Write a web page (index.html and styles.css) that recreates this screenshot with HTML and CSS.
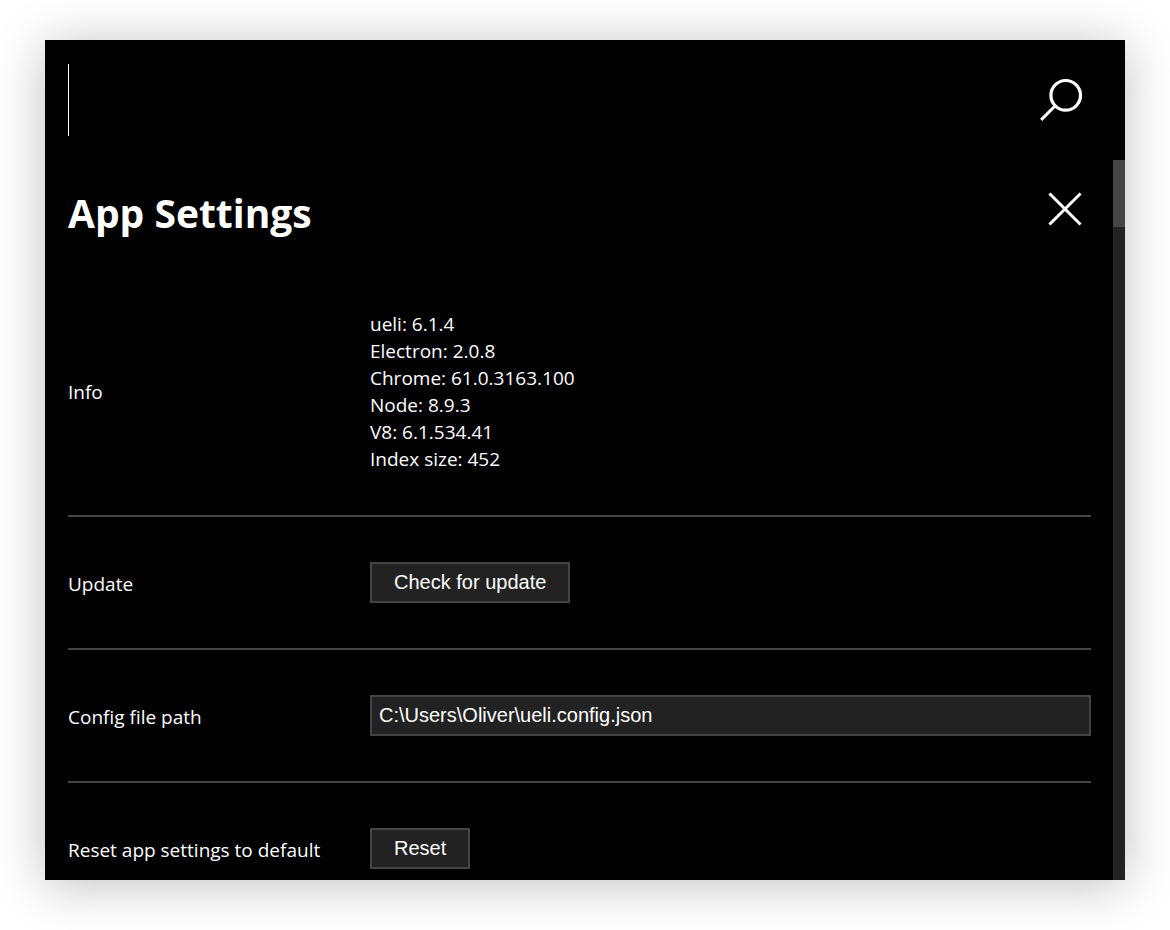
FILE: index.html
```html
<!DOCTYPE html>
<html lang="en">
<head>
<meta charset="utf-8">
<title>ueli</title>
<link rel="stylesheet" href="styles.css">
</head>
<body>
<main class="window">
  <header class="search">
    <span class="caret"></span>
    <input class="search-input" type="text" aria-label="Search">
    <svg class="search-icon" viewBox="0 0 44 44" fill="none" stroke="#fff" stroke-width="3.2" aria-hidden="true">
      <circle cx="26.7" cy="17.3" r="14.8"/>
      <path d="M16.2 27.8 3.2 40.8" stroke-linecap="square" stroke-width="3"/>
    </svg>
  </header>
  <div class="scroll-area">
    <section class="settings">
      <div class="title-bar">
        <h1 class="title">App Settings</h1>
        <button class="close" type="button" aria-label="Close">
          <svg class="close-icon" viewBox="0 0 36 36" fill="none" stroke="#fff" stroke-width="3" stroke-linecap="square" aria-hidden="true">
            <path d="M3.5 3.5 32.5 32.5M32.5 3.5 3.5 32.5"/>
          </svg>
        </button>
      </div>
      <div class="row">
        <span class="label">Info</span>
        <div class="info">
          <div>ueli: 6.1.4</div>
          <div>Electron: 2.0.8</div>
          <div>Chrome: 61.0.3163.100</div>
          <div>Node: 8.9.3</div>
          <div>V8: 6.1.534.41</div>
          <div>Index size: 452</div>
        </div>
      </div>
      <div class="row">
        <span class="label" id="update-label">Update</span>
        <button class="control button" type="button" aria-describedby="update-label">Check for update</button>
      </div>
      <div class="row">
        <label class="label" for="config-path">Config file path</label>
        <input class="control field" id="config-path" type="text" value="C:\Users\Oliver\ueli.config.json" readonly>
      </div>
      <div class="row">
        <span class="label" id="reset-label">Reset app settings to default</span>
        <button class="control button" type="button" aria-describedby="reset-label">Reset</button>
      </div>
    </section>
    <div class="scrollbar" aria-hidden="true"><div class="thumb"></div></div>
  </div>
</main>
</body>
</html>
```
FILE: styles.css
```css
* { box-sizing: border-box; }

body {
  margin: 0;
  height: 100vh;
  padding: 40px 45px 50px;
  display: flex;
  background: #fff;
  color: #fff;
  font: 19px/27px "Open Sans", "Noto Sans", sans-serif;
}

.window {
  flex: 1;
  min-width: 0;
  display: flex;
  flex-direction: column;
  overflow: hidden;
  background: #000;
  box-shadow: 0 5px 48px rgba(0, 0, 0, 0.25);
}

.search {
  flex: none;
  height: 120px;
  display: flex;
  align-items: center;
  padding: 0 42px 0 23px;
}

.caret {
  width: 1px;
  height: 72px;
  background: #fff;
}

.search-input {
  flex: 1;
  min-width: 0;
  height: 72px;
  border: 0;
  outline: 0;
  background: transparent;
  color: inherit;
  font: inherit;
  font-size: 40px;
}

.search-icon {
  width: 44px;
  height: 44px;
}

.scroll-area {
  flex: 1;
  min-height: 0;
  display: flex;
}

.settings {
  flex: 1;
  min-width: 0;
  overflow: hidden;
  padding: 0 22px 0 23px;
}

.title-bar {
  display: flex;
  align-items: center;
  justify-content: space-between;
  height: 106px;
  padding-right: 8px;
}

.title {
  margin: 0;
  font-size: 39px;
  line-height: 54px;
}

.close {
  display: flex;
  margin-bottom: 8px;
  padding: 0;
  border: 0;
  background: transparent;
  cursor: pointer;
}

.close-icon {
  width: 36px;
  height: 36px;
}

.row {
  display: grid;
  grid-template-columns: 302px 1fr;
  align-items: center;
  padding: 45px 0 42px;
  border-bottom: 2px solid #444;
}

.row:last-child { border-bottom: 0; }

.control {
  height: 41px;
  margin: 0 0 3px;
  border: 2px solid #444;
  border-radius: 0;
  background: #222;
  color: #fff;
  font: 20px/27px "Liberation Sans", Arial, sans-serif;
}

.button {
  justify-self: start;
  padding: 0 22px;
  cursor: pointer;
}

.field {
  width: 100%;
  padding: 0 7px;
}

.scrollbar {
  width: 12px;
  background: #222;
}

.thumb {
  height: 67px;
  background: #444;
}
```
